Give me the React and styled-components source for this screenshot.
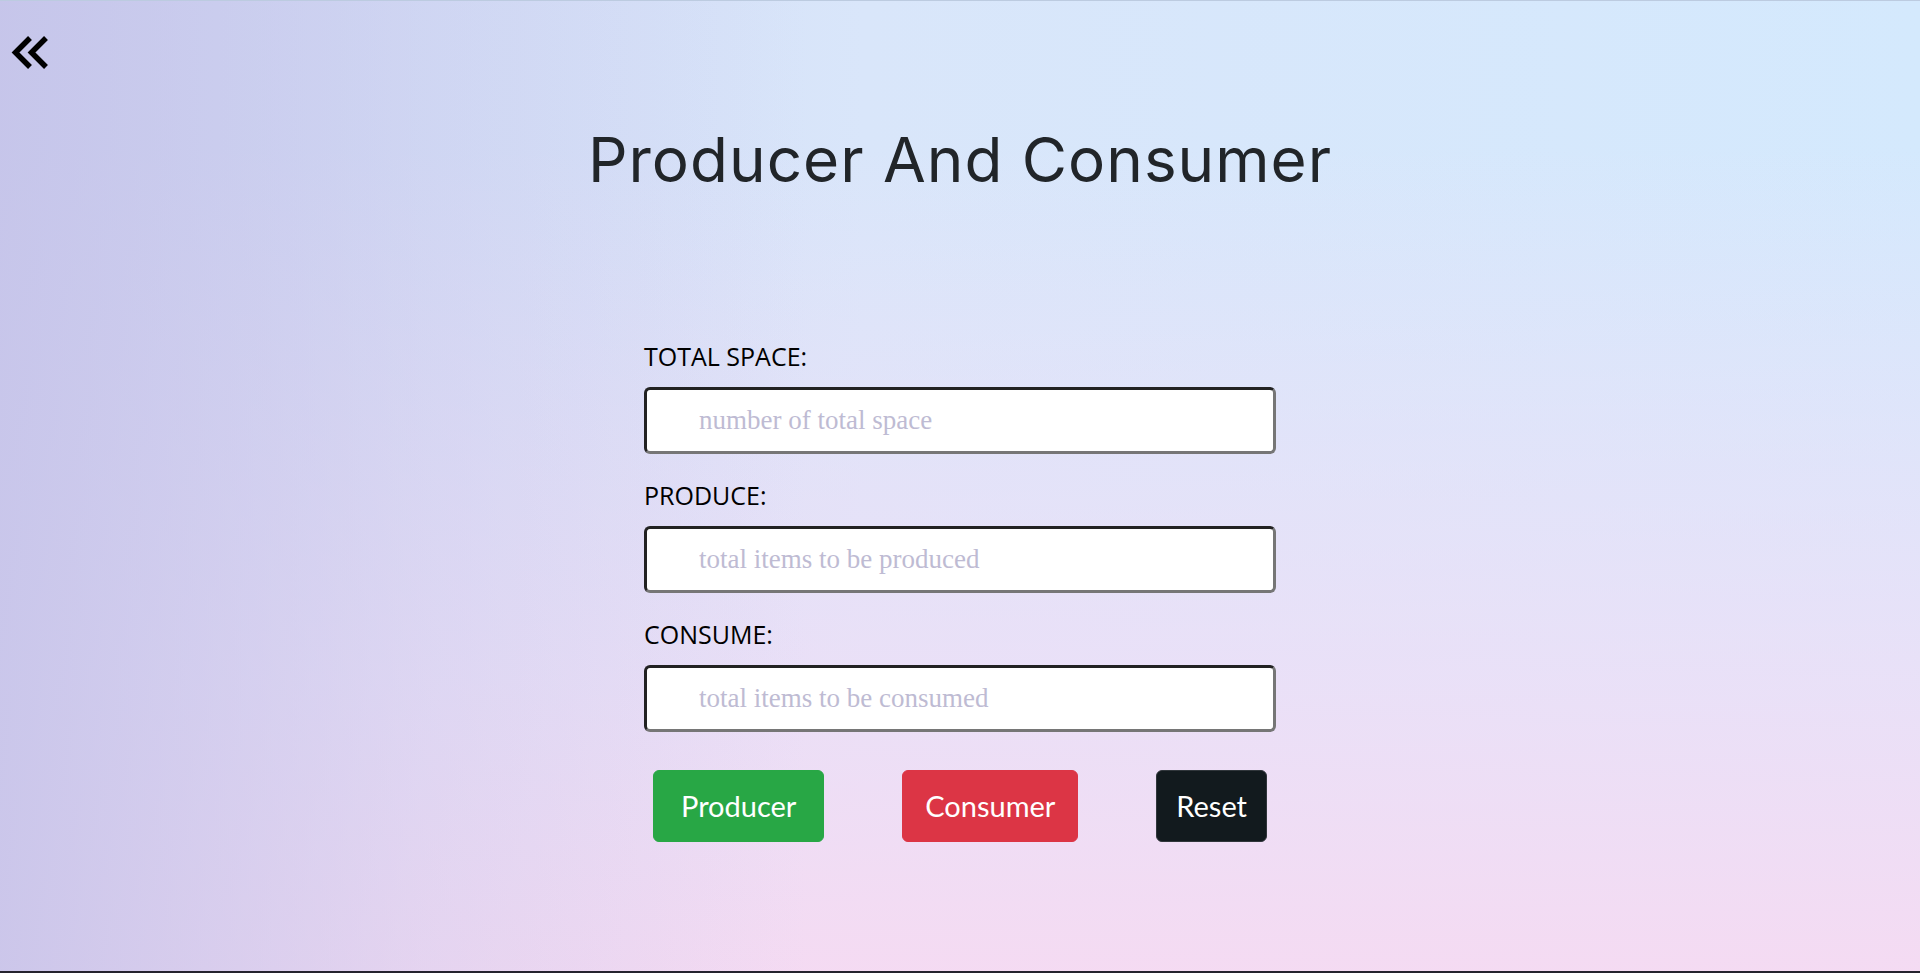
import React from 'react';
import styled, { createGlobalStyle } from 'styled-components';

const GlobalStyle = createGlobalStyle`
  html, body {
    margin: 0;
    padding: 0;
  }
  body {
    font-family: "Open Sans", "Liberation Sans", sans-serif;
  }
  * {
    box-sizing: border-box;
  }
`;

const fields = [
  { id: 'space', label: 'TOTAL SPACE:', placeholder: 'number of total space' },
  { id: 'produce', label: 'PRODUCE:', placeholder: 'total items to be produced' },
  { id: 'consume', label: 'CONSUME:', placeholder: 'total items to be consumed' },
];

const buttons = [
  { id: 'producer', text: 'Producer', bg: '#28a745', pad: 27 },
  { id: 'consumer', text: 'Consumer', bg: '#dc3545', pad: 22 },
  { id: 'reset', text: 'Reset', bg: '#121a1e', edge: '#30363b', pad: 19 },
];

export default function App() {
  return (
    <>
      <GlobalStyle />
      <Page>
        <TopBar>
          <BackLink href="#" aria-label="back">
            <svg width="40" height="37" viewBox="0 0 40 37" fill="none">
              <polyline points="21,4 6.5,18.5 21,33" stroke="#000" strokeWidth="5.5" />
              <polyline points="37,4 22.5,18.5 37,33" stroke="#000" strokeWidth="5.5" />
            </svg>
          </BackLink>
        </TopBar>

        <Title>Producer And Consumer</Title>

        <Form onSubmit={(e) => e.preventDefault()}>
          {fields.map((f) => (
            <Field key={f.id}>
              <Label htmlFor={f.id}>{f.label}</Label>
              <Input id={f.id} type="number" placeholder={f.placeholder} />
            </Field>
          ))}
          <ButtonRow>
            {buttons.map((b) => (
              <ActionButton key={b.id} type="button" $bg={b.bg} $edge={b.edge} $pad={b.pad}>
                {b.text}
              </ActionButton>
            ))}
          </ButtonRow>
        </Form>
      </Page>
    </>
  );
}

const Page = styled.div`
  min-height: 973px;
  display: flex;
  flex-direction: column;
  align-items: center;
  border-top: 1px solid #bccbe0;
  border-bottom: 2px solid #25232e;
  background:
    linear-gradient(to right, rgba(197, 195, 233, 0.85) 0%, rgba(200, 200, 236, 0.35) 22%, rgba(210, 210, 240, 0) 42%),
    linear-gradient(to bottom, rgba(242, 218, 244, 0) 15%, rgba(240, 222, 246, 0.75) 70%, rgba(246, 218, 242, 0.95) 100%),
    linear-gradient(to right, #cdd4f2 0%, #d9e6fa 45%, #d4e9fd 100%);
`;

const TopBar = styled.div`
  align-self: stretch;
  padding: 33px 0 0 9px;
  height: 71px;
`;

const BackLink = styled.a`
  display: inline-flex;
  color: #000;
`;

const Title = styled.h1`
  margin: 51px 0 0;
  font-family: Inter, "Liberation Sans", sans-serif;
  font-weight: 400;
  font-size: 62px;
  line-height: 1.2;
  color: #212529;
  letter-spacing: 1px;
`;

const Form = styled.form`
  width: 632px;
  margin-top: 141px;
  display: flex;
  flex-direction: column;
`;

const Field = styled.div`
  display: flex;
  flex-direction: column;
  margin-bottom: 23px;
`;

const Label = styled.label`
  font-family: "Open Sans", "Liberation Sans", sans-serif;
  font-size: 25px;
  line-height: 36px;
  color: #000;
  margin-bottom: 13px;
`;

const Input = styled.input`
  height: 67px;
  width: 100%;
  padding: 0 12px 0 52px;
  border: 3px solid;
  border-color: #222 #767676 #767676 #222;
  border-radius: 6px;
  background: #fff;
  font-family: "Liberation Serif", "Times New Roman", serif;
  font-size: 27px;
  color: #222;
  outline: none;
  -moz-appearance: textfield;

  &::-webkit-outer-spin-button,
  &::-webkit-inner-spin-button {
    -webkit-appearance: none;
    margin: 0;
  }

  &::placeholder {
    color: #bebbd3;
  }
`;

const ButtonRow = styled.div`
  display: flex;
  justify-content: space-between;
  padding: 0 9px;
  margin-top: 15px;
`;

const ActionButton = styled.button`
  height: 72px;
  padding: 0 ${({ $pad }) => $pad}px;
  border: 1px solid ${({ $edge, $bg }) => $edge || $bg};
  border-radius: 6px;
  background: ${({ $bg }) => $bg};
  color: #fff;
  font-family: Lato, "Open Sans", sans-serif;
  font-size: 29px;
  line-height: 42px;
  cursor: pointer;
`;
